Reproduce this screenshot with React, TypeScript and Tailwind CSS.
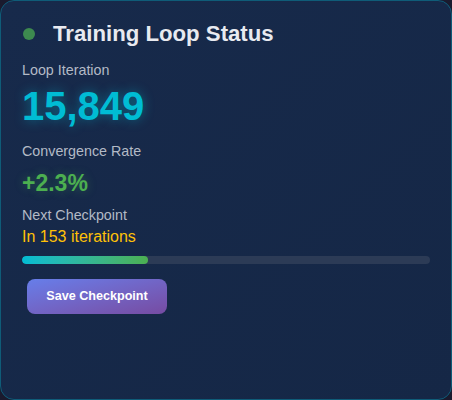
import React from "react";

export default function App() {
  return (
    <div className="w-[452px] h-[400px] bg-[#1a1a2e]" style={{ fontFamily: '"Liberation Sans", Arial, sans-serif' }}>
      <div className="w-full h-full rounded-[14px] border border-[#0f5c78] bg-gradient-to-br from-[#172a4b] to-[#152746] px-[21px] pt-[20px] flex flex-col">
        <div className="flex items-center h-[26px]">
          <div className="w-[12px] h-[12px] rounded-full bg-[#3d8a4f] ml-[1px]" />
          <div className="ml-[18px] text-[22.2px] leading-[26px] font-bold text-[#e8eaf0]">Training Loop Status</div>
        </div>
        <div className="mt-[15px] text-[14.3px] leading-[16px] text-[#b3bac6]">Loop Iteration</div>
        <div
          className="mt-[6px] text-[40px] leading-[44px] font-bold text-[#00bcd4]"
          style={{ textShadow: "0 0 12px rgba(0,188,212,0.45)" }}
        >
          15,849
        </div>
        <div className="mt-[15px] text-[14.3px] leading-[16px] text-[#b3bac6]">Convergence Rate</div>
        <div
          className="mt-[10px] text-[23px] leading-[28px] font-bold text-[#4caf50]"
          style={{ textShadow: "0 0 10px rgba(76,175,80,0.35)" }}
        >
          +2.3%
        </div>
        <div className="mt-[10px] text-[14.3px] leading-[16px] text-[#b3bac6]">Next Checkpoint</div>
        <div className="mt-[5px] text-[16px] leading-[18px] text-[#ffc107]">In 153 iterations</div>
        <div className="mt-[10px] h-[8px] w-full rounded-full bg-[#2c3b56] overflow-hidden">
          <div className="h-full rounded-full bg-gradient-to-r from-[#00bcd4] to-[#4caf50]" style={{ width: "31%" }} />
        </div>
        <div className="mt-[15px] ml-[5px]">
          <button className="w-[140px] h-[35px] rounded-[8px] bg-gradient-to-br from-[#667eea] to-[#764ba2] text-white font-bold text-[12.6px]">
            Save Checkpoint
          </button>
        </div>
      </div>
    </div>
  );
}
